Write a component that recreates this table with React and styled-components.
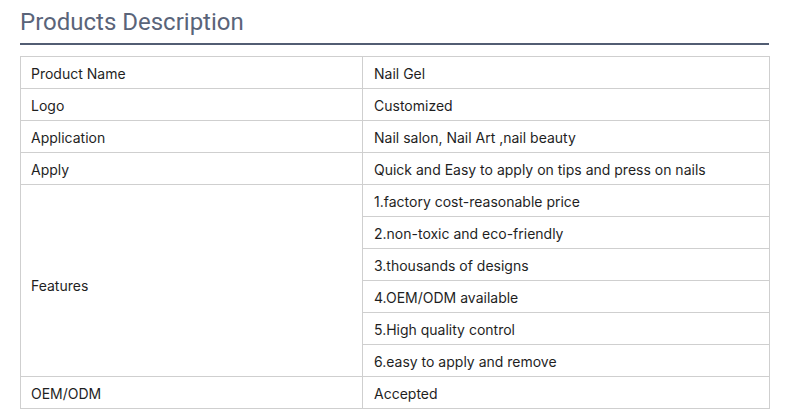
import React from 'react';
import styled, { createGlobalStyle } from 'styled-components';

const GlobalStyle = createGlobalStyle`
  body {
    margin: 0;
    background: #fff;
    font-family: Inter, "Noto Sans", sans-serif;
  }
`;

const Section = styled.section`
  padding: 5px 16px 0 20px;
`;

// Heading with the thick rule under it
const Title = styled.h2`
  margin: 0;
  font-family: Roboto, "Noto Sans", sans-serif;
  font-weight: 400;
  font-size: 24px;
  line-height: 34px;
  color: #5a6479;
  padding-bottom: 4px;
  border-bottom: 2px solid #525d73;
`;

const Table = styled.table`
  margin-top: 11px;
  width: 750px;
  border-collapse: collapse;
  font-size: 14px;
  color: #1f1f1f;
`;

const Cell = styled.td`
  border: 1px solid #cfcfcf;
  height: 29px;
  padding: ${({ $top }) => $top || 2}px 0 0 ${({ right }) => (right ? '11px' : '10px')};
  width: ${({ right }) => (right ? 'auto' : '331px')};
  vertical-align: middle;
`;

const rows = [
  ['Product Name', 'Nail Gel'],
  ['Logo', 'Customized'],
  ['Application', 'Nail salon, Nail Art ,nail beauty'],
  ['Apply', 'Quick and Easy to apply on tips and press on nails'],
];

const features = [
  '1.factory cost-reasonable price',
  '2.non-toxic and eco-friendly',
  '3.thousands of designs',
  '4.OEM/ODM available',
  '5.High quality control',
  '6.easy to apply and remove',
];

const App = () => (
  <>
    <GlobalStyle />
    <Section>
      <Title>Products Description</Title>
      <Table>
        <tbody>
          {rows.map(([k, v]) => (
            <tr key={k}>
              <Cell>{k}</Cell>
              <Cell right>{v}</Cell>
            </tr>
          ))}
          {features.map((f, i) => (
            <tr key={f}>
              {i === 0 && (
                <Cell rowSpan={features.length} $top={10}>
                  Features
                </Cell>
              )}
              <Cell right>{f}</Cell>
            </tr>
          ))}
          <tr>
            <Cell>OEM/ODM</Cell>
            <Cell right>Accepted</Cell>
          </tr>
        </tbody>
      </Table>
    </Section>
  </>
);

export default App;
